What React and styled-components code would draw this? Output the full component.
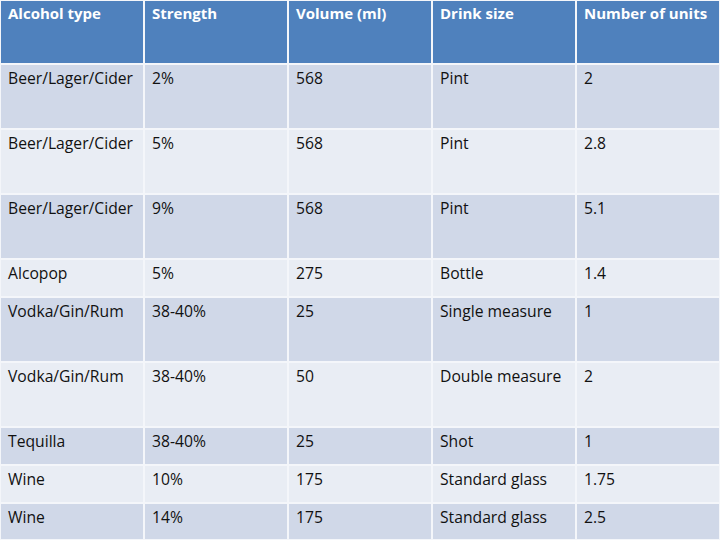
import React from "react";
import styled, { createGlobalStyle } from "styled-components";

const Global = createGlobalStyle`
  html, body { margin: 0; padding: 0; background: #ffffff; }
  body { font-family: "Open Sans", "Liberation Sans", sans-serif; }
`;

const Table = styled.div`
  width: 720px;
  height: 540px;
  box-sizing: border-box;
  padding: 1px;
  display: grid;
  grid-template-columns: repeat(5, 142px);
  grid-template-rows: 62px 63px 63px 63px 36px 63px 63px 36px 36px 35px;
  gap: 2px;
  background: #f4f6fa;
`;

const Cell = styled.div`
  background: ${(p) => (p.$head ? "#4f81bd" : p.$odd ? "#d0d8e8" : "#e9edf4")};
  color: ${(p) => (p.$head ? "#ffffff" : "#111111")};
  font-weight: ${(p) => (p.$head ? 700 : 400)};
  font-size: ${(p) => (p.$head ? "15px" : "15.7px")};
  line-height: 20px;
  padding: ${(p) => (p.$head ? "2px" : "3px")} 0 0 7px;
  white-space: nowrap;
  overflow: hidden;
`;

const head = ["Alcohol type", "Strength", "Volume (ml)", "Drink size", "Number of units"];
const rows = [
  ["Beer/Lager/Cider", "2%", "568", "Pint", "2"],
  ["Beer/Lager/Cider", "5%", "568", "Pint", "2.8"],
  ["Beer/Lager/Cider", "9%", "568", "Pint", "5.1"],
  ["Alcopop", "5%", "275", "Bottle", "1.4"],
  ["Vodka/Gin/Rum", "38-40%", "25", "Single measure", "1"],
  ["Vodka/Gin/Rum", "38-40%", "50", "Double measure", "2"],
  ["Tequilla", "38-40%", "25", "Shot", "1"],
  ["Wine", "10%", "175", "Standard glass", "1.75"],
  ["Wine", "14%", "175", "Standard glass", "2.5"],
];

export default function App() {
  return (
    <>
      <Global />
      <Table>
        {head.map((h) => (
          <Cell key={h} $head>{h}</Cell>
        ))}
        {rows.map((r, i) =>
          r.map((c, j) => (
            <Cell key={`${i}-${j}`} $odd={i % 2 === 0}>{c}</Cell>
          ))
        )}
      </Table>
    </>
  );
}
